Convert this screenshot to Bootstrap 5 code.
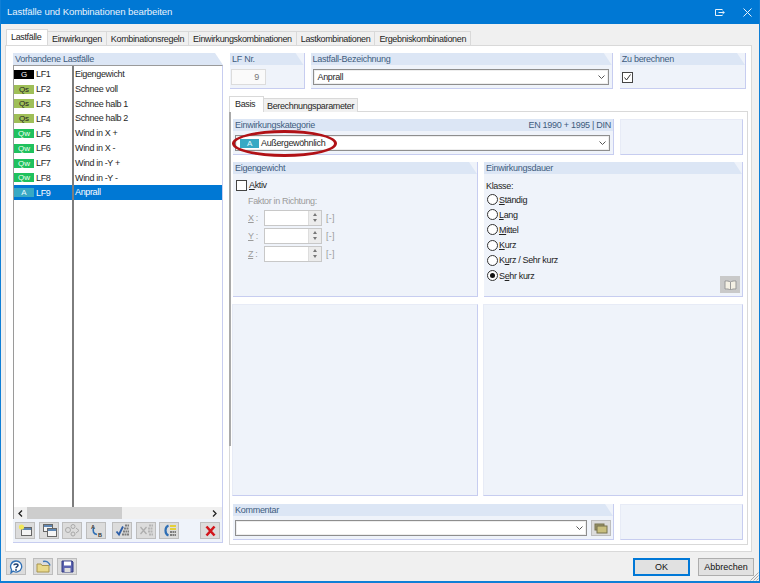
<!DOCTYPE html>
<html lang="de">
<head>
<meta charset="utf-8">
<title>Lastfälle und Kombinationen bearbeiten</title>
<link href="https://cdn.jsdelivr.net/npm/bootstrap@5.3.0/dist/css/bootstrap.min.css" rel="stylesheet">
<style>
html,body{margin:0;padding:0;width:760px;height:583px;overflow:hidden;background:#f0f0f0}
body{font-family:"Liberation Sans",Arial,sans-serif;font-size:9px;line-height:12px;color:#1f1f1f;letter-spacing:-.35px}
u{text-underline-offset:1px}
.dlg{width:760px;height:583px;border:1px solid #0f7fd6;border-top:0;border-bottom-width:2px;display:flex;flex-direction:column;background:#f0f0f0;position:relative}
.ttl{height:24px;background:#0078d4;color:#e8f2fb;font-size:9.6px;padding:0 7px 0 6px;flex:none;letter-spacing:-.1px}
.ttl svg{display:block}
.ttlbtns{gap:18px}
.tabrow{display:flex;margin:6px 0 0 5px;height:15px;flex:none;position:relative;z-index:2}
.tb{background:#f0f0f0;border:1px solid #d9d9d9;border-bottom:0;height:14px;margin-top:1px;padding:0 4px;line-height:14px;margin-left:-1px;white-space:nowrap}
.tb.on{background:#fff;height:16px;margin-top:-1px;margin-left:0;line-height:14px;padding:0 4px;width:42px;z-index:3}
.sheet{background:#fff;border:1px solid #d9d9d9;margin:0 7px 0 4px;height:507px;padding:7px 5px 0 7px;display:flex;gap:7px;flex:none}
.left{width:210px;flex:none;display:flex;flex-direction:column}
.hd{background:#dce6f5;color:#3e5c7e;height:12px;line-height:12px;padding:0 2px;letter-spacing:-.28px;clip-path:polygon(0 0,calc(100% - 8px) 0,100% 100%,0 100%);display:flex;justify-content:space-between;flex:none}
.hd-flat{clip-path:none}
.grp{background:#eff3fa;border-right:1px solid #c7cdf0;border-bottom:1px solid #c7cdf0;display:flex;flex-direction:column;min-width:0}
.grp.bare{border-top:1px solid #e7ebf6;border-left:1px solid #e7ebf6}
.lst{background:#fff;border:1px solid #9a9a9a;border-right:1px solid #c7cdf0;border-bottom:0;height:442px;position:relative;flex:none;padding-top:1px}
.rw{display:flex;height:14.8px;align-items:center}
.rw.sel{background:#0078d4;color:#fff}
.sw{width:20px;height:9px;color:#222;text-align:center;line-height:9px;font-size:8px;flex:none;letter-spacing:0}
.lf{width:39px;padding-left:2px;flex:none}
.nm{padding-left:2px;line-height:14.8px;flex:1}
.vln{position:absolute;left:58px;top:0;bottom:0;width:2px;background:#7d7d7d}
.sb{height:12px;background:#f0f0f0;display:flex;align-items:center;flex:none;border-left:1px solid #9a9a9a;border-right:1px solid #c7cdf0}
.sb .th{width:95px;height:12px;background:#cdcdcd;margin:0 90px 0 4px}
.tools{height:24px;background:#eff3fa;border-right:1px solid #c7cdf0;border-bottom:1px solid #c7cdf0;display:flex;align-items:center;padding-left:2px;flex:none}
.ib{width:20px;height:17px;background:#dcdcdc;border:1px solid #bdbdbd;display:flex;align-items:center;justify-content:center;flex:none;padding:0}
.ib svg{display:block}
.gap3{margin-left:3px}.gap4{margin-left:4px}.gap6{margin-left:6px}.gap21{margin-left:21px}
.right{flex:1;min-width:0;display:flex;flex-direction:column}
.top3{display:flex;gap:6px;height:36px;flex:none}
.fld{background:#fff;border:1px solid #8e8e8e;height:16px;display:flex;align-items:center;justify-content:space-between;padding:0 3px 0 4px;box-shadow:inset 0 0 0 1px #eee}
.chev{flex:none;display:block}
.num{width:35px;height:16px;border:1px solid #dcdcdc;background:#fafafa;margin:4px 0 0 1px;text-align:right;padding:1px 6px;color:#777}
.chk{width:11px;height:11px;border:1px solid #444;background:#fff;display:flex;align-items:center;justify-content:center;flex:none}
.subtabs{display:flex;margin:8px 0 0 -1px;height:15px;flex:none;position:relative;z-index:2}
.st{height:14px;margin-top:1px;background:#f0f0f0;border:1px solid #d9d9d9;border-bottom:0;padding:0 3px;line-height:14px;margin-left:-1px}
.st.on{background:#fff;height:16px;margin:-1px 0 0 0;padding:0 5px;border-bottom:0;width:35px}
.subp{border:1px solid #d9d9d9;border-left-color:transparent;height:434px;margin:-1px 0 0 -1px;padding:7px 3px 0 3px;width:519px;display:flex;flex-direction:column;flex:none;background:linear-gradient(#a9a9a9,#a9a9a9) 0 0/2px 335px no-repeat,linear-gradient(#d9d9d9,#d9d9d9) 0 0/1px 100% no-repeat;background-origin:border-box;background-clip:border-box}
.rw2{display:flex;gap:6px;flex:none}
.oval{position:absolute;left:-4px;top:-6px;width:105px;height:27px;border:3px solid #b01116;border-radius:50%/50%;pointer-events:none}
.cat{display:inline-block;width:19px;height:9px;background:#38a9c4;color:#e6fbff;text-align:center;line-height:9px;font-size:8px;margin-right:2px}
.spn{display:flex;align-items:center;height:17px;color:#9b9b9b;padding-left:15px}
.spn .lb{width:16px}
.sf{width:58px;height:16px;border:1px solid #c8c8c8;background:#fff;display:flex;justify-content:flex-end}
.arr{width:13px;background:#ececec;border-left:1px solid #ddd;display:flex;flex-direction:column;align-items:center;justify-content:center;gap:3px}
.arr i{display:block;width:0;height:0;border-left:2.5px solid transparent;border-right:2.5px solid transparent}
.arr i.a{border-bottom:3px solid #777}.arr i.b{border-top:3px solid #777}
.unit{margin-left:4px;letter-spacing:.3px}
.rd{display:flex;align-items:center;height:15.2px;padding-left:3px;color:#222}
.rd b{display:block;width:11px;height:11px;border:1px solid #333;border-radius:50%;background:#fff;margin-right:1px;flex:none;font-weight:400;position:relative}
.rd b.c::after{content:"";position:absolute;left:2px;top:2px;width:5px;height:5px;border-radius:50%;background:#111}
.foot{flex:1;display:flex;align-items:center;padding:0 5px 0 5px}
.fb{height:17px;width:20px}
.okb{width:57px;height:18px;background:#e1e1e1;border:2px solid #0078d7;text-align:center;line-height:14px;padding:0;color:#111;font-size:9px}
.ab{width:56px;height:18px;background:#e1e1e1;border:1px solid #adadad;text-align:center;line-height:16px;padding:0;margin-left:8px;color:#111;font-size:9px}
.grip{position:absolute;right:0;bottom:0;display:block}
.sw-g{background:#000;color:#fff}.sw-s{background:#9fbf58}.sw-w{background:#1fc15d;color:#f0fff0}.sw-a{background:#38a9c4;color:#e6fbff}
.w-lf{width:75px}.w-nm{width:304px}.w-zu{width:127px;margin-left:1px}
.mx-02{margin-left:2px;margin-right:3px}
.r-a{height:36px}.g-a{width:381px}.g-b{width:123px}
.r-b{height:135px;margin-top:7px}.g-c{width:245px}.g-d{width:259px}
.r-c{height:192px;margin-top:7px}.g-e{width:246px;margin-left:-1px}.g-f{width:260px;margin-left:-1px}
.r-d{height:36px;margin-top:8px}.g-g{width:381px}.g-h{width:123px}
.chk-zu{margin:7px 0 0 2px}
.chkline{padding:5px 0 0 3px;gap:2px}.fakt{color:#9b9b9b;padding:4px 0 2px 15px}
.mt1{margin-top:1px}.kl{padding:6px 0 0 2px;height:18px}
.book{position:absolute;right:2px;bottom:3px;width:20px;height:17px;background:#c9c9c9;display:flex;align-items:center;justify-content:center}
.kom{padding:4px 2px 0 2px;gap:4px}.kb{height:16px}
.fgap{margin-left:7px}
</style>
</head>
<body>
<div class="dlg">
  <div class="ttl d-flex align-items-center justify-content-between">
    <span>Lastfälle und Kombinationen bearbeiten</span>
    <span class="d-flex align-items-center ttlbtns">
      <svg width="10" height="9" viewBox="0 0 10 9" fill="none" stroke="#e8f2fb"><path d="M7.500 1.500H.5v6h7M3.500 4.500h6M7.500 3l1.700 1.500L7.500 6"/></svg>
      <svg width="9" height="9" viewBox="0 0 9 9" fill="none" stroke="#e8f2fb"><path d="M.5.500l8 8M8.500.5l-8 8"/></svg>
    </span>
  </div>
  <div class="tabrow">
    <div class="tb on">Lastfälle</div><div class="tb">Einwirkungen</div><div class="tb">Kombinationsregeln</div><div class="tb">Einwirkungskombinationen</div><div class="tb">Lastkombinationen</div><div class="tb">Ergebniskombinationen</div>
  </div>
  <div class="sheet">
    <div class="left">
      <div class="hd">Vorhandene Lastfälle</div>
      <div class="lst">
        <div class="rw"><span class="sw sw-g">G</span><span class="lf">LF1</span><span class="nm">Eigengewicht</span></div>
        <div class="rw"><span class="sw sw-s">Qs</span><span class="lf">LF2</span><span class="nm">Schnee voll</span></div>
        <div class="rw"><span class="sw sw-s">Qs</span><span class="lf">LF3</span><span class="nm">Schnee halb 1</span></div>
        <div class="rw"><span class="sw sw-s">Qs</span><span class="lf">LF4</span><span class="nm">Schnee halb 2</span></div>
        <div class="rw"><span class="sw sw-w">Qw</span><span class="lf">LF5</span><span class="nm">Wind in X +</span></div>
        <div class="rw"><span class="sw sw-w">Qw</span><span class="lf">LF6</span><span class="nm">Wind in X -</span></div>
        <div class="rw"><span class="sw sw-w">Qw</span><span class="lf">LF7</span><span class="nm">Wind in -Y +</span></div>
        <div class="rw"><span class="sw sw-w">Qw</span><span class="lf">LF8</span><span class="nm">Wind in -Y -</span></div>
        <div class="rw sel"><span class="sw sw-a">A</span><span class="lf">LF9</span><span class="nm">Anprall</span></div>
        <div class="vln"></div>
      </div>
      <div class="sb">
        <svg width="5" height="7" viewBox="0 0 5 7" fill="none" stroke="#222" stroke-width="1.300" class="ms-1"><path d="M4 .5 1 3.500l3 3"/></svg>
        <div class="th"></div>
        <svg width="5" height="7" viewBox="0 0 5 7" fill="none" stroke="#222" stroke-width="1.300"><path d="M1 .5l3 3-3 3"/></svg>
      </div>
      <div class="tools">
        <button class="ib" type="button"><svg width="15" height="13" viewBox="0 0 15 13"><rect x="3.500" y="3.500" width="10" height="8" fill="#f4f4f4" stroke="#666"/><rect x="4" y="4" width="9" height="2" fill="#5e86b3"/><circle cx="3.500" cy="3" r="2.600" fill="#f2e85a"/></svg></button>
        <button class="ib gap4" type="button"><svg width="15" height="13" viewBox="0 0 15 13"><rect x="1.500" y=".5" width="9" height="7" fill="#f4f4f4" stroke="#666"/><rect x="2" y="1" width="8" height="2" fill="#5e86b3"/><rect x="5.500" y="4.500" width="9" height="8" fill="#f4f4f4" stroke="#666"/><rect x="6" y="5" width="8" height="2" fill="#5e86b3"/></svg></button>
        <button class="ib gap3" type="button"><svg width="15" height="13" viewBox="0 0 15 13" opacity=".5"><circle cx="3" cy="6" r="2.500" fill="#ddd" stroke="#777"/><circle cx="8" cy="2.500" r="2" fill="#ddd" stroke="#777"/><circle cx="8" cy="10" r="2" fill="#ddd" stroke="#777"/><path d="M11 4l3 2.500-3 2.500" fill="none" stroke="#777"/></svg></button>
        <button class="ib gap4" type="button"><svg width="15" height="13" viewBox="0 0 15 13"><path d="M4.500 4c-1 3.500 0 6 3.500 6.500" fill="none" stroke="#2f6fb5" stroke-width="1.600"/><text x="2" y="5" font-size="5.500" font-family="Liberation Sans" font-weight="700" fill="#333">A</text><text x="9" y="12.500" font-size="5.500" font-family="Liberation Sans" font-weight="700" fill="#333">B</text></svg></button>
        <button class="ib gap6" type="button"><svg width="15" height="13" viewBox="0 0 15 13"><path d="M1.500 7.500l2.500 3 4-8" fill="none" stroke="#2f5fa8" stroke-width="1.900"/><path d="M10 1.500h4M9 4.500h5M8 7.500h6M7 10.500h7" stroke="#7d7d7d" stroke-width="2" stroke-dasharray="2 .5"/></svg></button>
        <button class="ib gap4" type="button"><svg width="15" height="13" viewBox="0 0 15 13" opacity=".45"><path d="M1.500 3l6 7M7.500 3l-6 7" stroke="#777" stroke-width="1.300"/><path d="M10 1.500h4M9 4.500h5M9 7.500h5M10 10.500h4" stroke="#888" stroke-width="2" stroke-dasharray="2 .5"/></svg></button>
        <button class="ib gap3" type="button"><svg width="15" height="13" viewBox="0 0 15 13"><path d="M6.500 1.500C2.500 3 2.500 10 6.500 11.500" fill="none" stroke="#2f6fb5" stroke-width="2.200"/><path d="M8 2h6M8 5h6" stroke="#e3cf3a" stroke-width="2"/><path d="M8 8h6M8 11h6" stroke="#7d7d7d" stroke-width="2" stroke-dasharray="2 .5"/></svg></button>
        <button class="ib gap21" type="button"><svg width="13" height="12" viewBox="0 0 13 12"><path d="M2.500 1.500l8 9M10.500 1.500l-8 9" stroke="#d2161c" stroke-width="2.600"/></svg></button>
      </div>
    </div>
    <div class="right">
      <div class="top3">
        <div class="grp w-lf"><div class="hd">LF Nr.</div><div class="num">9</div></div>
        <div class="grp w-nm"><div class="hd">Lastfall-Bezeichnung</div><div class="fld mt-1 mx-02"><span>Anprall</span><svg class="chev" width="7" height="4" viewBox="0 0 7 4" fill="none" stroke="#555"><path d="M.5.500l3 3 3-3"/></svg></div></div>
        <div class="grp w-zu"><div class="hd">Zu berechnen</div><div class="chk chk-zu"><svg width="9" height="9" viewBox="0 0 9 9" fill="none" stroke="#333"><path d="M1.500 4.500l2 2.500 4-5.500"/></svg></div></div>
      </div>
      <div class="subtabs"><div class="st on">Basis</div><div class="st">Berechnungsparameter</div></div>
      <div class="subp">
        <div class="rw2 r-a">
          <div class="grp g-a"><div class="hd hd-flat"><span>Einwirkungskategorie</span><span>EN 1990 + 1995 | DIN</span></div>
            <div class="fld mt-1 mx-02 position-relative"><span class="d-flex align-items-center"><span class="cat">A</span>Außergewöhnlich</span><svg class="chev" width="7" height="4" viewBox="0 0 7 4" fill="none" stroke="#555"><path d="M.5.500l3 3 3-3"/></svg><span class="oval"></span></div>
          </div>
          <div class="grp bare g-b"></div>
        </div>
        <div class="rw2 r-b">
          <div class="grp g-c"><div class="hd">Eigengewicht</div>
            <div class="d-flex align-items-center chkline"><span class="chk"></span><span><u>A</u>ktiv</span></div>
            <div class="fakt">Faktor in Richtung:</div>
            <div class="spn"><span class="lb"><u>X</u> :</span><span class="sf"><span class="arr"><i class="a"></i><i class="b"></i></span></span><span class="unit">[-]</span></div>
            <div class="spn mt1"><span class="lb"><u>Y</u> :</span><span class="sf"><span class="arr"><i class="a"></i><i class="b"></i></span></span><span class="unit">[-]</span></div>
            <div class="spn mt1"><span class="lb"><u>Z</u> :</span><span class="sf"><span class="arr"><i class="a"></i><i class="b"></i></span></span><span class="unit">[-]</span></div>
          </div>
          <div class="grp g-d position-relative"><div class="hd">Einwirkungsdauer</div>
            <div class="kl">Klasse:</div>
            <div class="rd"><b></b><span><u>S</u>tändig</span></div>
            <div class="rd"><b></b><span><u>L</u>ang</span></div>
            <div class="rd"><b></b><span><u>M</u>ittel</span></div>
            <div class="rd"><b></b><span><u>K</u>urz</span></div>
            <div class="rd"><b></b><span>K<u>u</u>rz / Sehr kurz</span></div>
            <div class="rd"><b class="c"></b><span>S<u>e</u>hr kurz</span></div>
            <span class="book"><svg width="13" height="10" viewBox="0 0 13 10"><path d="M6.500 2C5 1 3 .8 1 1v8c2-.2 4 0 5.500 1 1.500-1 3.500-1.200 5.500-1V1c-2-.2-4 0-5.500 1z" fill="#f4f0e4" stroke="#999"/><path d="M6.500 2v8" stroke="#999"/></svg></span>
          </div>
        </div>
        <div class="rw2 r-c">
          <div class="grp bare g-e"></div>
          <div class="grp bare g-f"></div>
        </div>
        <div class="rw2 r-d">
          <div class="grp g-g"><div class="hd">Kommentar</div>
            <div class="d-flex kom"><div class="fld flex-grow-1"><span></span><svg class="chev" width="7" height="4" viewBox="0 0 7 4" fill="none" stroke="#555"><path d="M.5.500l3 3 3-3"/></svg></div>
            <button class="ib kb" type="button"><svg width="14" height="11" viewBox="0 0 14 11"><rect x="1" y="1" width="9" height="6" fill="#9a9468" stroke="#77724f"/><rect x="3" y="3" width="10" height="7" fill="#c9bf7e" stroke="#77724f"/></svg></button></div>
          </div>
          <div class="grp bare g-h"></div>
        </div>
      </div>
    </div>
  </div>
  <div class="foot">
    <button class="ib fb" type="button"><svg width="14" height="14" viewBox="0 0 14 14"><path d="M7 1a5.500 5.500 0 1 1-3 10l-2 2 .5-3.500A5.500 5.500 0 0 1 7 1z" fill="#fff" stroke="#2f6fb5" stroke-width="1.300"/><path d="M5 5.300C5 3.500 9 3.500 9 5.300 9 6.800 7 6.500 7 8.300" fill="none" stroke="#1d3f70" stroke-width="1.500"/><circle cx="7" cy="10" r=".9" fill="#1d3f70"/></svg></button>
    <button class="ib fb fgap" type="button"><svg width="15" height="13" viewBox="0 0 15 13"><path d="M1 4h4l1 1.500h7V12H1z" fill="#e9d98a" stroke="#a8954f"/><path d="M7 1.500c3-.8 6 .5 7 4" fill="none" stroke="#3f78b8" stroke-width="1.500"/></svg></button>
    <button class="ib fb gap4" type="button"><svg width="13" height="13" viewBox="0 0 13 13"><path d="M1 1h10l1 1v10H1z" fill="#5b63b0" stroke="#333a80"/><rect x="3" y="1.500" width="7" height="4" fill="#fff"/><rect x="3.500" y="8" width="6" height="4" fill="#ddd"/></svg></button>
    <span class="flex-grow-1"></span>
    <button class="okb" type="button">OK</button>
    <button class="ab" type="button">Abbrechen</button>
  </div>
  <svg class="grip" width="10" height="10" viewBox="0 0 10 10" stroke="#a8a8a8"><path d="M9.500 1.500l-8 8M9.500 4.500l-5 5M9.500 7.500l-2 2"/></svg>
</div>
</body>
</html>
